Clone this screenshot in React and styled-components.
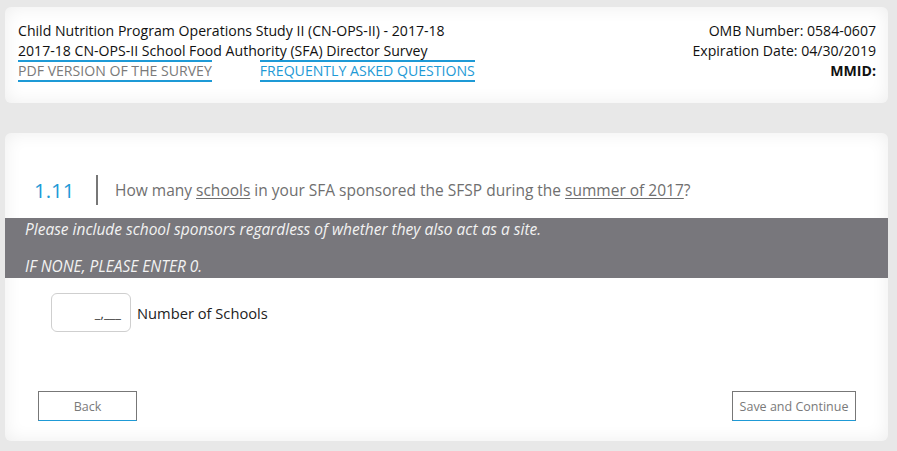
import React from "react";
import styled, { createGlobalStyle } from "styled-components";

const Global = createGlobalStyle`
  html, body { margin: 0; padding: 0; background: #e8e8e8; }
  body { font-family: "Open Sans", "Noto Sans", sans-serif; }
  * { box-sizing: border-box; }
`;

const Page = styled.div`
  width: 897px;
  height: 451px;
  padding: 7px 9px 0 5px;
  display: flex;
  flex-direction: column;
  gap: 30px;
`;

const Card = styled.div`
  background: #fff;
  border-radius: 6px;
  box-shadow: inset 0 0 18px rgba(0, 0, 0, 0.07);
`;

const Header = styled(Card)`
  height: 96px;
  padding: 14px 12px 0 13px;
  display: flex;
  justify-content: space-between;
  font-size: 14.1px;
  line-height: 20px;
  color: #111;
`;

const Col = styled.div`
  display: flex;
  flex-direction: column;
  align-items: ${(p) => (p.$right ? "flex-end" : "flex-start")};
`;

const Links = styled.div`
  display: flex;
  gap: 48px;
`;

const TopLink = styled.a`
  display: block;
  color: ${(p) => (p.$blue ? "#1e9ad6" : "#7a7a7a")};
  border-top: 2px solid #1e9ad6;
  border-bottom: 2px solid #1e9ad6;
  line-height: 18px;
  text-decoration: none;
  margin-top: -1px;
`;

const Bold = styled.span`
  font-weight: 700;
`;

const Main = styled(Card)`
  height: 308px;
  padding-top: 42px;
  display: flex;
  flex-direction: column;
`;

const QRow = styled.div`
  display: flex;
  align-items: center;
  padding-left: 29px;
  height: 30px;
`;

const QNum = styled.span`
  font-size: 20.5px;
  color: #1e9ad6;
  width: 62px;
`;

const Divider = styled.span`
  width: 2px;
  height: 30px;
  background: #777;
  margin-right: 17px;
`;

const QText = styled.span`
  font-size: 15.5px;
  color: #6f6f6f;
  u { text-decoration: underline; text-underline-offset: 2px; }
`;

const Band = styled.div`
  margin-top: 13px;
  background: #78777c;
  height: 60px;
  padding: 1px 20px 0;
  color: #f2f2f2;
  font-style: italic;
  font-size: 15.5px;
  line-height: 21px;
  display: flex;
  flex-direction: column;
  gap: 16px;
`;

const AnswerRow = styled.div`
  display: flex;
  align-items: center;
  gap: 6px;
  padding-left: 46px;
  margin-top: 15px;
`;

const NumInput = styled.div`
  width: 80px;
  height: 39px;
  border: 1px solid #cfcfcf;
  border-radius: 6px;
  display: flex;
  align-items: center;
  justify-content: flex-end;
  padding-right: 9px;
  font-size: 13px;
  color: #333;
`;

const AnswerLabel = styled.span`
  font-size: 14.7px;
  color: #222;
`;

const Footer = styled.div`
  margin-top: auto;
  margin-bottom: 20px;
  display: flex;
  justify-content: space-between;
  padding: 0 32px 0 33px;
`;

const Btn = styled.button`
  font-family: inherit;
  height: 30px;
  width: ${(p) => p.$w}px;
  background: #fff;
  border: 1px solid #777;
  border-bottom: 1px solid #1e9ad6;
  color: #7a7a7a;
  font-size: 12.5px;
  padding: 0;
`;

export default function App() {
  return (
    <>
      <Global />
      <Page>
        <Header>
          <Col>
            <span>Child Nutrition Program Operations Study II (CN-OPS-II) - 2017-18</span>
            <span>2017-18 CN-OPS-II School Food Authority (SFA) Director Survey</span>
            <Links>
              <TopLink href="#">PDF VERSION OF THE SURVEY</TopLink>
              <TopLink href="#" $blue>FREQUENTLY ASKED QUESTIONS</TopLink>
            </Links>
          </Col>
          <Col $right>
            <span>OMB Number: 0584-0607</span>
            <span>Expiration Date: 04/30/2019</span>
            <Bold>MMID:</Bold>
          </Col>
        </Header>
        <Main>
          <QRow>
            <QNum>1.11</QNum>
            <Divider />
            <QText>
              How many <u>schools</u> in your SFA sponsored the SFSP during the <u>summer of 2017</u>?
            </QText>
          </QRow>
          <Band>
            <span>Please include school sponsors regardless of whether they also act as a site.</span>
            <span>IF NONE, PLEASE ENTER 0.</span>
          </Band>
          <AnswerRow>
            <NumInput>_,___</NumInput>
            <AnswerLabel>Number of Schools</AnswerLabel>
          </AnswerRow>
          <Footer>
            <Btn $w={99}>Back</Btn>
            <Btn $w={124}>Save and Continue</Btn>
          </Footer>
        </Main>
      </Page>
    </>
  );
}
